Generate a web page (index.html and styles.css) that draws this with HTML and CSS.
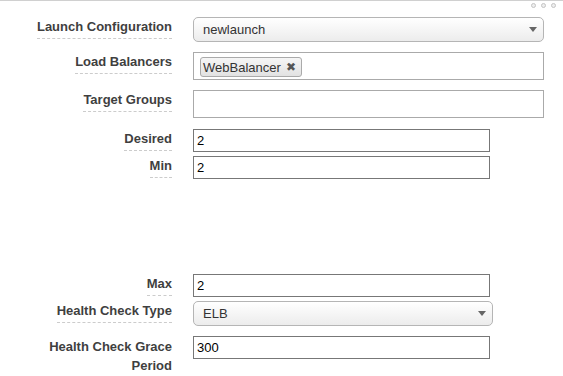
FILE: index.html
```html
<!DOCTYPE html>
<html>
<head>
    <title>Auto Scaling Group Details</title>
    <link rel="stylesheet" href="styles.css">
</head>
<body>
    <div class="panel">
        <div class="panel-dots">
            <span class="dot"></span>
            <span class="dot"></span>
            <span class="dot"></span>
        </div>
        <div class="form">
            <div class="row">
                <div class="label-cell"><span class="label">Launch Configuration</span></div>
                <div class="select select-wide">
                    <span>newlaunch</span>
                    <span class="caret"></span>
                </div>
            </div>
            <div class="row">
                <div class="label-cell"><span class="label">Load Balancers</span></div>
                <div class="tag-box">
                    <span class="tag">WebBalancer <span class="tag-close">&#x2716;</span></span>
                </div>
            </div>
            <div class="row row-target">
                <div class="label-cell"><span class="label">Target Groups</span></div>
                <div class="tag-box"></div>
            </div>
            <div class="row row-tight">
                <div class="label-cell"><span class="label">Desired</span></div>
                <input class="text-input" type="text" value="2">
            </div>
            <div class="row row-gap">
                <div class="label-cell"><span class="label">Min</span></div>
                <input class="text-input" type="text" value="2">
            </div>
            <div class="row row-tight">
                <div class="label-cell"><span class="label">Max</span></div>
                <input class="text-input" type="text" value="2">
            </div>
            <div class="row">
                <div class="label-cell"><span class="label">Health Check Type</span></div>
                <div class="select select-short">
                    <span>ELB</span>
                    <span class="caret"></span>
                </div>
            </div>
            <div class="row">
                <div class="label-cell"><span class="label label-plain">Health Check Grace Period</span></div>
                <input class="text-input" type="text" value="300">
            </div>
        </div>
    </div>
</body>
</html>
```

FILE: styles.css
```css
body {
    font-family: "Liberation Sans", Arial, sans-serif;
    background-color: #fff;
    margin: 0;
    padding: 0;
}
.panel {
    border-top: 1px solid #d0d0d0;
    height: 375px;
}
.panel-dots {
    display: flex;
    justify-content: flex-end;
    gap: 5px;
    padding: 2px 7px 0 0;
    height: 14px;
}
.dot {
    box-sizing: border-box;
    width: 5px;
    height: 5px;
    border: 1px solid #c4c4c4;
    border-radius: 50%;
    background-color: #eee;
}
.form {
    display: flex;
    flex-direction: column;
}
.row {
    display: flex;
    align-items: flex-start;
    margin-bottom: 10px;
}
.row-target {
    margin-bottom: 11px;
}
.row-tight {
    margin-bottom: 4px;
}
.row-gap {
    margin-bottom: 95px;
}
.label-cell {
    width: 172px;
    padding-right: 21px;
    text-align: right;
    flex-shrink: 0;
}
.label {
    display: inline-block;
    font-size: 13px;
    font-weight: bold;
    color: #3f3f3f;
    line-height: 18px;
    padding-bottom: 2px;
    border-bottom: 1px dashed #ccc;
}
.label-plain {
    border-bottom: none;
    line-height: 19px;
    padding-top: 1px;
    width: 140px;
}
.select {
    box-sizing: border-box;
    height: 25px;
    display: flex;
    align-items: center;
    justify-content: space-between;
    padding: 0 6px 0 9px;
    font-size: 13px;
    color: #333;
    border: 1px solid #b5b5b5;
    border-radius: 5px;
    background: linear-gradient(#fff, #ececec);
}
.select-wide {
    width: 351px;
}
.select-short {
    width: 300px;
}
.caret {
    width: 0;
    height: 0;
    border-left: 4px solid transparent;
    border-right: 4px solid transparent;
    border-top: 5px solid #666;
}
.tag-box {
    box-sizing: border-box;
    width: 351px;
    height: 28px;
    border: 1px solid #aaa;
    background-color: #fff;
    padding: 4px 6px;
}
.tag {
    display: inline-flex;
    align-items: center;
    gap: 5px;
    box-sizing: border-box;
    height: 20px;
    padding: 0 5px 0 2px;
    font-size: 13px;
    color: #333;
    border: 1px solid #aaa;
    border-radius: 3px;
    background: linear-gradient(#f6f6f6, #e2e2e2);
}
.tag-close {
    font-size: 12px;
    color: #555;
}
.text-input {
    box-sizing: border-box;
    width: 297px;
    height: 23px;
    margin: 0;
    padding: 0 3px;
    border: 1px solid #777;
    font-family: "Liberation Sans", Arial, sans-serif;
    font-size: 13px;
    color: #000;
    outline: none;
}
```
